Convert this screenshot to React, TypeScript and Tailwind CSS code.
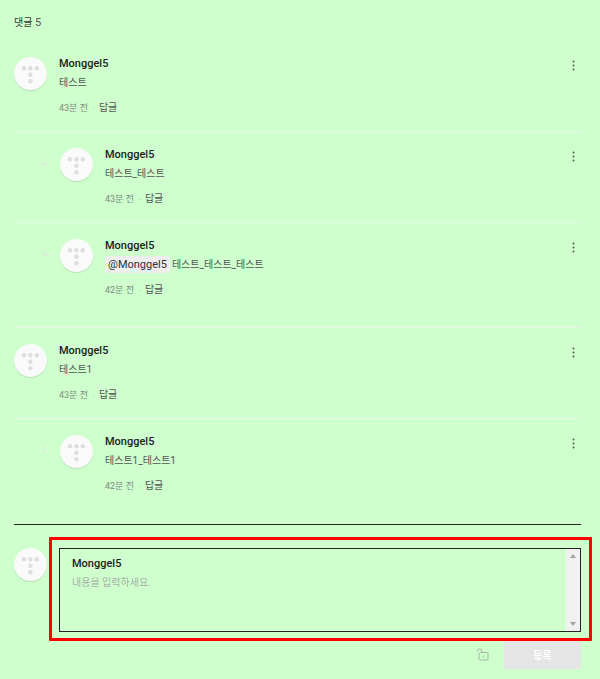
import React, { useState } from 'react';

interface Comment {
  id: number;
  author: string;
  text: string;
  time: string;
  isReply?: boolean;
  mention?: string;
  endsThread?: boolean;
}

const comments: Comment[] = [
  { id: 1, author: 'Monggel5', text: '테스트', time: '43분 전' },
  { id: 2, author: 'Monggel5', text: '테스트_테스트', time: '43분 전', isReply: true },
  {
    id: 3,
    author: 'Monggel5',
    text: '테스트_테스트_테스트',
    time: '42분 전',
    isReply: true,
    mention: '@Monggel5',
    endsThread: true
  },
  { id: 4, author: 'Monggel5', text: '테스트1', time: '43분 전' },
  { id: 5, author: 'Monggel5', text: '테스트1_테스트1', time: '42분 전', isReply: true, endsThread: true }
];

const Avatar: React.FC = () => (
  <span className="block size-[33px] shrink-0 rounded-full bg-[#fafafa] shadow-[0_1px_1px_rgba(0,0,0,0.12)]">
    <svg viewBox="0 0 33 33" className="size-full" fill="#dedede" aria-hidden="true">
      <circle cx="10" cy="11.2" r="2.2" />
      <circle cx="16.4" cy="11.2" r="2.2" />
      <circle cx="22.8" cy="11.2" r="2.2" />
      <circle cx="16.4" cy="17.7" r="2.2" />
      <circle cx="16.4" cy="24.2" r="2.2" />
    </svg>
  </span>
);

const MoreButton: React.FC = () => (
  <button type="button" aria-label="더보기" className="h-4 w-4 shrink-0">
    <svg viewBox="0 0 16 16" className="size-4" fill="#445544" aria-hidden="true">
      <circle cx="8.5" cy="4.5" r="0.9" />
      <circle cx="8.5" cy="8.5" r="0.9" />
      <circle cx="8.5" cy="12.5" r="0.9" />
    </svg>
  </button>
);

const CommentItem: React.FC<{ comment: Comment }> = ({ comment }) => (
  <li
    className={`
      flex border-b border-[#ebf3eb] pt-4 last:border-transparent
      ${comment.isReply ? 'pl-[29px]' : ''}
      ${comment.endsThread ? 'pb-[30px]' : 'pb-4'}
    `}
  >
    {comment.isReply && (
      <span className="mt-[9px] mr-[9px] block size-2 shrink-0 border-b border-l border-[#dfe6df]" />
    )}
    <Avatar />
    <div className="ml-3 min-w-0 flex-1">
      <strong className="block text-[11px] leading-[14px] font-medium text-[#222]">{comment.author}</strong>
      <p className="text-[10px] leading-6 text-[#555]">
        {comment.mention && (
          <a href="#mention" className="mr-[2px] rounded-[1px] bg-[#eee] px-[3px] py-[2px] text-[11px] text-[#333]">
            {comment.mention}
          </a>
        )}
        {comment.text}
      </p>
      <div className="mt-[6px] flex items-center text-[9px] leading-[14px] text-[#7d8c7d]">
        <span>{comment.time}</span>
        <span className="mx-[5px] size-px bg-[#b5c5b5]" />
        <button type="button" className="text-[10px] text-[#555]">
          답글
        </button>
      </div>
    </div>
    <MoreButton />
  </li>
);

const CommentForm: React.FC = () => {
  const [content, setContent] = useState('');
  const [isSecret, setIsSecret] = useState(false);

  return (
    <form onSubmit={(e) => e.preventDefault()} className="flex border-t border-[#222] pt-[23px]">
      <Avatar />
      <div className="ml-3 min-w-0 flex-1">
        <div className="relative flex border border-[#222]">
          <div className="flex flex-1 flex-col pt-2 pl-3">
            <label htmlFor="content" className="text-[11px] leading-[14px] font-medium text-[#222]">
              Monggel5
            </label>
            <textarea
              id="content"
              value={content}
              onChange={(e) => setContent(e.target.value)}
              placeholder="내용을 입력하세요."
              className="h-[60px] resize-none bg-transparent text-[10px] leading-6 text-[#333] outline-none placeholder:text-[#a9b0a9]"
            />
          </div>
          <div className="flex w-[14px] flex-col items-center justify-between bg-[#f1f1f1] py-[5px]">
            <svg viewBox="0 0 6 4" className="h-1 w-[6px]" fill="#a3a3a3" aria-hidden="true">
              <path d="M0 4 3 0l3 4z" />
            </svg>
            <svg viewBox="0 0 6 4" className="h-1 w-[6px]" fill="#a3a3a3" aria-hidden="true">
              <path d="M0 0 3 4l3-4z" />
            </svg>
          </div>
          {/* Highlight frame */}
          <div className="pointer-events-none absolute -top-3 -right-3 -bottom-[10px] -left-[11px] rounded-[1px] border-3 border-[#fe0000]" />
        </div>
        <div className="mt-[9px] flex items-center justify-end">
          <button
            type="button"
            aria-label="비밀글"
            aria-pressed={isSecret}
            onClick={() => setIsSecret((prev) => !prev)}
            className="mr-[14px]"
          >
            <svg viewBox="0 0 14 14" className="size-[14px]" fill="none" stroke="#a5b5a5" aria-hidden="true">
              <rect x="3" y="4.5" width="9" height="7.5" rx="1.2" />
              <path d="M1.2 3.6v-.4a2.3 2.3 0 0 1 4.6 0v1.3M8.2 7.2l-1 2" />
            </svg>
          </button>
          <button type="submit" className="h-7 w-[77px] bg-[#e5e5e5] text-[10px] font-bold text-white">
            등록
          </button>
        </div>
      </div>
    </form>
  );
};

const App: React.FC = () => {
  return (
    <main className="min-h-screen bg-[#ceffcd] pt-4 pr-[19px] pb-[9px] pl-[14px] font-[Roboto,'Noto_Sans_CJK_KR',sans-serif]">
      <h2 className="text-[10px] leading-[14px] text-[#333]">
        댓글 <span className="text-[11px] text-[#555]">5</span>
      </h2>
      <ul className="mt-[11px]">
        {comments.map(comment => (
          <CommentItem key={comment.id} comment={comment} />
        ))}
      </ul>
      <CommentForm />
    </main>
  );
};

export default App;
